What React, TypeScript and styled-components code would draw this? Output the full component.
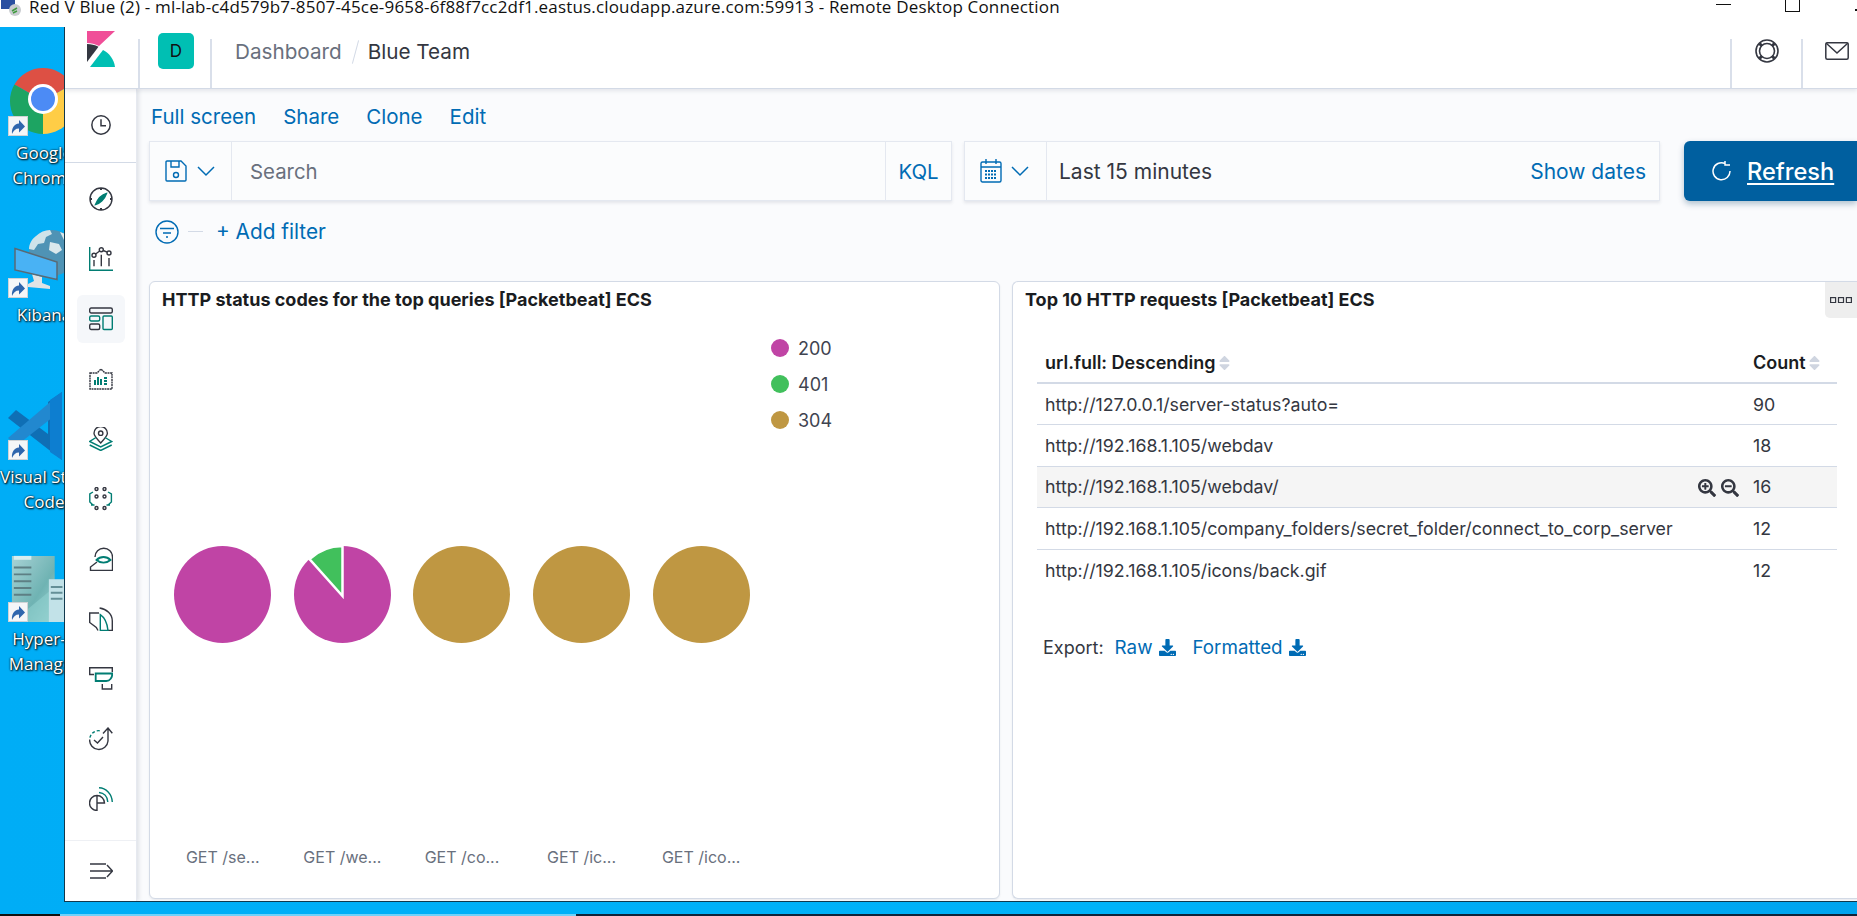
import React from "react";
import styled, { createGlobalStyle } from "styled-components";
import { FaDownload, FaSearchMinus, FaSearchPlus, FaSort } from "react-icons/fa";

const Global = createGlobalStyle`
  html, body { margin: 0; padding: 0; overflow: hidden; background: #00adf6; }
  * { box-sizing: border-box; }
`;

const LINK = "#006bb4";
const DARK = "#343741";
const TEAL = "#017d73";
const BORDER = "#d3dae6";

const Page = styled.div`
  width: 1857px;
  height: 916px;
  display: flex;
  flex-direction: column;
  overflow: hidden;
  font-family: Inter, "Liberation Sans", sans-serif;
  color: ${DARK};
`;
const TitleBar = styled.div`
  height: 27px;
  flex: none;
  background: #fff;
  display: flex;
  align-items: flex-start;
  overflow: hidden;
`;
const TitleIcon = styled.svg`
  width: 22px;
  height: 16px;
  margin: 0 7px 0 0;
  flex: none;
`;
const TitleText = styled.div`
  font-family: "Open Sans", "Liberation Sans", sans-serif;
  font-size: 17px;
  line-height: 13px;
  color: #111;
  white-space: nowrap;
  flex: 1;
  min-width: 0;
  letter-spacing: 0.17px;
`;
const WinControls = styled.div`
  display: flex;
  align-items: flex-start;
  height: 14px;
  flex: none;
`;
const WinMin = styled.div`
  width: 15px;
  height: 1px;
  margin-top: 4px;
  background: #111;
`;
const WinMax = styled.div`
  width: 15px;
  height: 12px;
  margin: 0 55px 0 54px;
  border: 1px solid #111;
  border-top: none;
`;
const WinClose = styled.div`
  width: 2px;
  height: 2px;
  margin-top: 9px;
  background: #111;
`;
const Desktop = styled.div`
  height: 887px;
  flex: none;
  display: flex;
  align-items: flex-start;
  background: linear-gradient(90deg, #00adf6, #00b3f9 60%, #00a4ef);
`;
const TaskEdge = styled.div`
  height: 2px;
  flex: none;
  background: linear-gradient(90deg, #111 60px, #6fd2fa 60px, #6fd2fa 576px, #10243a 576px);
`;
const Strip = styled.div`
  width: 64px;
  height: 887px;
  flex: none;
  overflow: hidden;
  padding-top: 39px;
`;
const Shortcut = styled.div`
  width: 88px;
  height: 162px;
`;
const Art = styled.div`
  position: relative;
  width: 88px;
  height: 70px;
`;
const ArtSvg = styled.svg`
  display: block;
  width: 88px;
  height: 70px;
  overflow: visible;
`;
const Badge = styled.svg`
  position: absolute;
  left: 8px;
  bottom: 0;
  width: 20px;
  height: 20px;
`;
const ShortcutLabel = styled.div`
  margin-top: 4px;
  text-align: center;
  color: #fff;
  font-family: "Open Sans", "Liberation Sans", sans-serif;
  font-size: 17px;
  line-height: 25px;
  white-space: nowrap;
  text-shadow: 1px 1px 2px #000, 0 0 2px #000;
`;
const Window = styled.div`
  width: 1793px;
  height: 875px;
  flex: none;
  background: #fff;
  border-left: 1px solid #12394d;
  border-bottom: 1px solid #12394d;
  display: flex;
  flex-direction: column;
  overflow: hidden;
`;
const Header = styled.header`
  height: 62px;
  flex: none;
  display: flex;
  background: #fff;
  border-bottom: 1px solid ${BORDER};
  box-shadow: 0 2px 4px rgba(65, 78, 101, 0.12);
  position: relative;
  z-index: 2;
`;
const LogoCell = styled.div`
  width: 73px;
  flex: none;
  padding: 4px 0 0 22px;
`;
const Divided = styled.div`
  flex: none;
  border-left: 2px solid #d9dfea;
  margin-top: 12px;
  height: 49px;
`;
const AvatarCell = styled(Divided)`
  width: 72px;
  position: relative;
`;
const Avatar = styled.div`
  position: absolute;
  left: 18px;
  top: -6px;
  width: 36px;
  height: 36px;
  border-radius: 5px;
  background: #00bfb3;
  color: #111;
  font-size: 17px;
  display: flex;
  align-items: center;
  justify-content: center;
`;
const Crumbs = styled.div`
  flex: 1;
  border-left: 2px solid #d9dfea;
  margin-top: 12px;
  height: 49px;
  padding: 0 0 0 23px;
  display: flex;
  align-items: flex-start;
  font-size: 20.7px;
  line-height: 26px;
`;
const CrumbMuted = styled.span`
  color: #69707d;
`;
const CrumbSep = styled.span`
  width: 1px;
  height: 24px;
  margin: 1px 12px 0 13px;
  background: ${BORDER};
  transform: rotate(15deg);
`;
const CrumbCurrent = styled.span`
  color: ${DARK};
`;
const HeaderIconCell = styled(Divided)`
  width: 71px;
  display: flex;
  justify-content: center;
  padding-top: 0;
`;
const HeaderMailCell = styled(Divided)`
  width: 56px;
  padding: 3px 0 0 22px;
`;
const Body = styled.div`
  flex: 1;
  min-height: 0;
  display: flex;
`;
const Sidebar = styled.nav`
  width: 72px;
  flex: none;
  background: #fff;
  box-shadow: 2px 0 4px rgba(65, 78, 101, 0.14);
  border-right: 1px solid #e6e9f0;
  display: flex;
  flex-direction: column;
  position: relative;
  z-index: 1;
`;
const NavRecent = styled.div`
  height: 74px;
  flex: none;
  border-bottom: 1px solid ${BORDER};
  padding-bottom: 2px;
  display: flex;
  align-items: center;
  justify-content: center;
`;
const NavList = styled.div`
  flex: 1;
  padding-top: 6px;
  display: flex;
  flex-direction: column;
`;
const NavItem = styled.div<{ $active?: boolean }>`
  height: 48px;
  width: 48px;
  margin: 6px 12px;
  flex: none;
  display: flex;
  align-items: center;
  justify-content: center;
  border-radius: 6px;
  background: ${(p) => (p.$active ? "#f5f7fa" : "transparent")};
`;
const NavFoot = styled.div`
  height: 61px;
  flex: none;
  border-top: 1px solid #eef0f4;
  display: flex;
  align-items: center;
  justify-content: center;
`;
const Nic = styled.svg`
  width: 24px;
  height: 24px;
  fill: none;
  stroke: ${DARK};
  stroke-width: 1.4;
`;
const ClockIcon = styled(Nic)`
  width: 20px;
  height: 20px;
`;
const Main = styled.main`
  flex: 1;
  min-width: 0;
  background: #fafbfd;
  padding-left: 12px;
  overflow: hidden;
`;
const TopLinks = styled.div`
  height: 52px;
  display: flex;
  align-items: center;
  gap: 27px;
  padding: 4px 0 0 2px;
`;
const TopLink = styled.a`
  color: ${LINK};
  font-size: 20.5px;
  line-height: 24px;
`;
const QueryRow = styled.div`
  display: flex;
  align-items: stretch;
  height: 60px;
`;
const Box = styled.div`
  display: flex;
  align-items: center;
  flex: none;
  height: 60px;
  border: 1px solid #e4e8f0;
  background: #fbfcfd;
  box-shadow: 0 2px 3px rgba(65, 78, 101, 0.12);
`;
const SearchBox = styled(Box)`
  width: 803px;
`;
const DateBox = styled(Box)`
  width: 696px;
  margin-left: 12px;
`;
const Prepend = styled.div`
  height: 100%;
  flex: none;
  display: flex;
  align-items: center;
  border-right: 1px solid #e4e8f0;
`;
const SavePrepend = styled(Prepend)`
  width: 82px;
  padding-left: 15px;
  gap: 9px;
`;
const CalPrepend = styled(Prepend)`
  width: 82px;
  padding-left: 15px;
  gap: 8px;
`;
const SearchText = styled.div`
  flex: 1;
  padding-left: 18px;
  font-size: 20.4px;
  color: #69707d;
`;
const KqlCell = styled.div`
  width: 66px;
  height: 100%;
  flex: none;
  border-left: 1px solid #e4e8f0;
  display: flex;
  align-items: center;
  justify-content: center;
  font-size: 20.4px;
  color: ${LINK};
`;
const DateText = styled.div`
  flex: 1;
  padding-left: 12px;
  font-size: 21px;
  color: ${DARK};
`;
const ShowDates = styled.a`
  padding-right: 13px;
  font-size: 21px;
  color: ${LINK};
`;
const RefreshButton = styled.button`
  width: 173px;
  height: 60px;
  margin-left: 24px;
  flex: none;
  border: none;
  border-radius: 6px 0 0 6px;
  background: #005f9f;
  color: #fff;
  box-shadow: 0 3px 6px rgba(0, 60, 100, 0.3);
  display: flex;
  align-items: center;
  padding: 0 0 0 28px;
  gap: 15px;
  font-family: inherit;
  font-size: 23.6px;
  font-weight: 500;
`;
const RefreshLabel = styled.span`
  text-decoration: underline;
  text-underline-offset: 3px;
`;
const FilterRow = styled.div`
  height: 60px;
  display: flex;
  align-items: center;
  padding: 1px 0 0 6px;
`;
const FilterDash = styled.span`
  width: 15px;
  height: 1px;
  margin: 0 13px 0 9px;
  background: ${BORDER};
`;
const AddFilter = styled.a`
  font-size: 20.8px;
  color: ${LINK};
`;
const Panels = styled.div`
  margin-top: 20px;
  display: flex;
  gap: 12px;
`;
const Panel = styled.section<{ $w: number; $open?: boolean }>`
  width: ${(p) => p.$w}px;
  height: 618px;
  flex: none;
  background: #fff;
  border: 1px solid ${BORDER};
  border-right: ${(p) => (p.$open ? "none" : undefined)};
  border-radius: ${(p) => (p.$open ? "6px 0 0 6px" : "6px")};
  box-shadow: 0 1px 2px rgba(65, 78, 101, 0.1);
  position: relative;
  overflow: hidden;
`;
const PanelTitle = styled.h3`
  margin: 0;
  height: 35px;
  padding: 8px 0 0 12px;
  font-size: 18px;
  line-height: 20px;
  font-weight: 700;
  color: #1a1c21;
`;
const OptionsButton = styled.div`
  position: absolute;
  top: 0;
  right: 0;
  width: 32px;
  height: 36px;
  background: #eeeeee;
  border-bottom-left-radius: 5px;
  display: flex;
  align-items: center;
  justify-content: center;
`;
const Legend = styled.ul`
  list-style: none;
  margin: 13px 0 0 621px;
  padding: 0;
`;
const LegendRow = styled.li`
  height: 36px;
  display: flex;
  align-items: center;
  gap: 9px;
  font-size: 18px;
  color: #3f4450;
`;
const LegendDot = styled.span<{ $c: string }>`
  width: 18px;
  height: 18px;
  border-radius: 50%;
  background: ${(p) => p.$c};
`;
const PieRow = styled.div`
  margin: 108px 0 0 13px;
  display: flex;
`;
const PieCell = styled.div`
  width: 119.6px;
  display: flex;
  justify-content: center;
`;
const LabelRow = styled.div`
  margin: 204px 0 0 13px;
  display: flex;
`;
const PieLabel = styled.div`
  width: 119.6px;
  text-align: center;
  font-size: 16px;
  line-height: 20px;
  color: #69707d;
`;
const TableWrap = styled.div`
  margin: 25px 0 0 24px;
  width: 800px;
`;
const Table = styled.table`
  width: 800px;
  border-collapse: collapse;
  table-layout: fixed;
  font-size: 17.8px;
`;
const Th = styled.th<{ $w: number }>`
  width: ${(p) => p.$w}px;
  height: 41px;
  padding: 0 0 0 8px;
  text-align: left;
  font-weight: 600;
  color: #1a1c21;
  font-size: 18px;
  border-bottom: 2px solid ${BORDER};
  white-space: nowrap;
`;
const SortIcon = styled(FaSort)`
  width: 13px;
  height: 18px;
  margin: 0 0 -3px 2px;
  color: #cfd5e0;
`;
const Tr = styled.tr<{ $hover?: boolean }>`
  height: 41.5px;
  background: ${(p) => (p.$hover ? "#f5f5f5" : "transparent")};
  border-bottom: 1px solid ${BORDER};
  &:last-child {
    border-bottom: none;
  }
`;
const Td = styled.td`
  padding: 0 0 0 8px;
  color: #343741;
  white-space: nowrap;
  position: relative;
`;
const CellTools = styled.span`
  position: absolute;
  right: 6px;
  top: 12px;
  display: flex;
  gap: 5px;
  color: #343741;
`;
const ExportRow = styled.div`
  margin: 45px 0 0 6px;
  display: flex;
  align-items: center;
  font-size: 18px;
  color: #343741;
`;
const ExportLabel = styled.span`
  margin-right: 11px;
`;
const ExportLink = styled.a`
  color: ${LINK};
  display: flex;
  align-items: center;
  gap: 6px;
  margin-right: 17px;
  font-size: 18.8px;
`;

const Blue = { stroke: LINK, fill: "none", strokeWidth: 1.4 } as const;
const T = { stroke: TEAL } as const;

const Chevron = () => (
  <svg width="20" height="20" viewBox="0 0 20 20" fill="none" stroke={LINK} strokeWidth="1.5">
    <path d="M2 6l8 8 8-8" />
  </svg>
);

const Logo = () => (
  <svg width="28" height="36" viewBox="0 0 28 36">
    <path d="M0 0h28L12 15C8 13 4 12 0 12z" fill="#f04e98" />
    <path d="M0 13c4 0 8 .8 11.500 2.800L0 31z" fill="#343741" />
    <path d="M3 36L16 19c6 3 11 9 12 17z" fill="#00bfb3" />
  </svg>
);

const Pie = ({ c, wedge }: { c: string; wedge?: boolean }) => (
  <svg width="97" height="97" viewBox="0 0 97 97">
    <circle cx="48.500" cy="48.500" r="48.500" fill={c} />
    {wedge && <path d="M48.500 50L48.500 0A48.500 48.500 0 0 0 15.500 13z" fill="#41c05c" stroke="#fff" strokeWidth="2.500" />}
  </svg>
);

const ShortcutBadge = () => (
  <Badge viewBox="0 0 20 20">
    <rect x=".5" y=".5" width="19" height="19" fill="#f4f6f8" stroke="#cfd3d6" />
    <path d="M4 18c-.5-6 2-10 7-10.500V4l6 6.500-6 6V12.500c-3.500 0-5.500 2-7 5.500z" fill="#2f66ad" />
  </Badge>
);

const ChromeArt = () => (
  <ArtSvg viewBox="0 0 88 70">
    <path d="M43 35L14.400 18.500A33 33 0 0 1 71.600 18.500z" fill="#dd5044" />
    <path d="M43 35L14.400 18.500A33 33 0 0 0 43 68z" fill="#1da462" />
    <path d="M43 35L43 68A33 33 0 0 0 71.600 18.500z" fill="#ffcd46" />
    <circle cx="43" cy="33" r="15" fill="#fff" />
    <circle cx="43" cy="33" r="12" fill="#4c8bf5" />
  </ArtSvg>
);

const KibanaArt = () => (
  <ArtSvg viewBox="0 0 88 70">
    <circle cx="52" cy="25" r="23" fill="#4f93b5" />
    <path d="M36 8c4-4 9-6 14-6l2 4-6 3-2 6-6 1-4 6-5-1c0-5 3-10 7-13z" fill="#cfe3ea" />
    <path d="M50 14l9 2 3 6-6 4-7-4zM60 4l5 2 5 8-6-2z" fill="#dbe8ec" />
    <path d="M32 46l10 3v6l8 3v3l-22-2v-3l6-3z" fill="#dfe3e5" />
    <path d="M15 20.500l42 13.500v17.500L15 42z" fill="#49b2f4" stroke="#5a6a75" strokeWidth="1.500" />
  </ArtSvg>
);

const VsArt = () => (
  <ArtSvg viewBox="0 0 88 70">
    <path d="M62 2v68L8 28l8-8 32 24V12z" fill="#0f6fb5" />
    <path d="M62 2L8 48l8 8L62 20z" fill="#2288cf" />
    <path d="M50 10l12-8v68l-12-8z" fill="#0d7ed0" />
  </ArtSvg>
);

const HyperArt = () => (
  <ArtSvg viewBox="0 0 88 72">
    <defs>
      <linearGradient id="srv" x1="0" y1="0" x2="1" y2="1">
        <stop offset="0" stopColor="#a9d3d6" />
        <stop offset=".6" stopColor="#6fb3b3" />
        <stop offset="1" stopColor="#9fd4d4" />
      </linearGradient>
    </defs>
    <path d="M11 4h44v68H11z" fill="url(#srv)" />
    <path d="M13 4h18v4H13z" fill="#d8eef0" />
    <path d="M13 16h18M13 23h18M13 30h18M13 37h18M13 44h18" stroke="#5d7f84" strokeWidth="2" />
    <path d="M11 72l44-36v36z" fill="#8fd0cf" opacity=".6" />
    <path d="M49 28h16v44H49z" fill="#c2e2e8" />
    <path d="M51 36h12M51 42h12M51 48h12" stroke="#648f97" strokeWidth="2" />
  </ArtSvg>
);

export default function App() {
  return (
    <Page>
      <Global />
      <TitleBar>
        <TitleIcon viewBox="0 0 22 16">
          <rect x="1" y="0" width="14" height="9" fill="#2a4fa0" />
          <circle cx="15" cy="10" r="6" fill="#c9ccd0" />
          <path d="M12 11l5-3M13 13l4-2" stroke="#3e9a3e" strokeWidth="1.500" />
        </TitleIcon>
        <TitleText>Red V Blue (2) - ml-lab-c4d579b7-8507-45ce-9658-6f88f7cc2df1.eastus.cloudapp.azure.com:59913 - Remote Desktop Connection</TitleText>
        <WinControls>
          <WinMin />
          <WinMax />
          <WinClose />
        </WinControls>
      </TitleBar>
      <Desktop>
        <Strip>
          <Shortcut>
            <Art><ChromeArt /><ShortcutBadge /></Art>
            <ShortcutLabel>Google<br />Chrome</ShortcutLabel>
          </Shortcut>
          <Shortcut>
            <Art><KibanaArt /><ShortcutBadge /></Art>
            <ShortcutLabel>Kibana</ShortcutLabel>
          </Shortcut>
          <Shortcut>
            <Art><VsArt /><ShortcutBadge /></Art>
            <ShortcutLabel>Visual Studio<br />Code</ShortcutLabel>
          </Shortcut>
          <Shortcut>
            <Art><HyperArt /><ShortcutBadge /></Art>
            <ShortcutLabel>Hyper-V<br />Manager</ShortcutLabel>
          </Shortcut>
        </Strip>
        <Window>
          <Header>
            <LogoCell><Logo /></LogoCell>
            <AvatarCell><Avatar>D</Avatar></AvatarCell>
            <Crumbs>
              <CrumbMuted>Dashboard</CrumbMuted>
              <CrumbSep />
              <CrumbCurrent>Blue Team</CrumbCurrent>
            </Crumbs>
            <HeaderIconCell>
              <svg width="24" height="24" viewBox="0 0 24 24" fill="none" stroke={DARK} strokeWidth="1.600">
                <circle cx="12" cy="12" r="11" />
                <circle cx="12" cy="12" r="7.500" />
                <path d="M4.500 4.500l2.500 2.500M19.500 4.500L17 7M4.500 19.500L7 17M19.500 19.500L17 17" strokeWidth="3" />
              </svg>
            </HeaderIconCell>
            <HeaderMailCell>
              <svg width="24" height="18" viewBox="0 0 24 18" fill="none" stroke={DARK} strokeWidth="1.500">
                <rect x=".8" y=".8" width="22.400" height="16.400" rx="1.500" />
                <path d="M1 1l11 10L23 1" />
              </svg>
            </HeaderMailCell>
          </Header>
          <Body>
            <Sidebar>
              <NavRecent>
                <ClockIcon viewBox="0 0 24 24">
                  <circle cx="12" cy="12" r="11" strokeWidth="1.800" />
                  <path d="M12 5v8h6" strokeWidth="1.800" />
                </ClockIcon>
              </NavRecent>
              <NavList>
                <NavItem>
                  <Nic viewBox="0 0 24 24">
                    <circle cx="12" cy="12" r="11" />
                    <path d="M12 1v2M12 21v2M1 12h2M21 12h2" strokeWidth="2" />
                    <path d="M17.500 6.500c-4 1-8 4-11 11 4-1 9-5 11-11z" fill={TEAL} {...T} />
                  </Nic>
                </NavItem>
                <NavItem>
                  <Nic viewBox="0 0 24 24">
                    <circle cx="5" cy="8.300" r="2" />
                    <circle cx="12.300" cy="2.700" r="2" />
                    <circle cx="20" cy="6" r="2" />
                    <path d="M6.600 7L10.700 4M14.200 3.500L18.200 5.200M5 13v6.300M12.300 7.700v11.600M20 11v8.300" />
                    <path d="M.7 0v23.300H24" {...T} />
                  </Nic>
                </NavItem>
                <NavItem $active>
                  <Nic viewBox="0 0 24 24">
                    <rect x=".7" y="1" width="22.600" height="5" rx="1.500" />
                    <rect x=".7" y="9" width="10" height="5" rx="1.500" {...T} />
                    <rect x=".7" y="17" width="10" height="5.500" rx="1.500" />
                    <rect x="14" y="9" width="9.300" height="13.500" rx="1" {...T} />
                  </Nic>
                </NavItem>
                <NavItem>
                  <Nic viewBox="0 0 24 24">
                    <path d="M1 6h7l4-4 4 4h7v16H1z" strokeDasharray="2 .6" />
                    <path d="M6 13v5M9 10v8M12 12v6M15 11h3M15 14h3M15 17h3" stroke={TEAL} strokeWidth="2" />
                  </Nic>
                </NavItem>
                <NavItem>
                  <Nic viewBox="0 0 24 24">
                    <path d="M11.700 16C8 12 5 8.500 5 6.200a6.700 6.700 0 0 1 13.400 0c0 2.300-3 5.800-6.700 9.800z" />
                    <circle cx="11.700" cy="6.200" r="2.200" />
                    <path d="M7 10.500L.7 14.500l11 5.500 11-5.500-6.700-4M.7 18l11 5.500 11-5.500" {...T} />
                  </Nic>
                </NavItem>
                <NavItem>
                  <Nic viewBox="0 0 24 24">
                    <circle cx="7.500" cy="2" r="1.500" />
                    <circle cx="15.500" cy="2" r="1.500" />
                    <circle cx="7.500" cy="9.500" r="1.500" />
                    <circle cx="15.500" cy="9.500" r="1.500" />
                    <circle cx="7.500" cy="21" r="1.500" />
                    <circle cx="15.500" cy="21" r="1.500" />
                    <path d="M4 5L.8 7v8L4 18M2 18h3.500M19 5l3.400 2v8L19 18M21 18h-3.500" {...T} />
                  </Nic>
                </NavItem>
                <NavItem>
                  <Nic viewBox="0 0 24 24">
                    <path d="M6 10a8.750 8.750 0 1 1 17.500 0v13.500H1.500V20L8 15" />
                    <path d="M7.500 13c4-4 10-4 14 0-4 3.500-10 3.500-14 0z" {...T} strokeWidth="1.800" />
                  </Nic>
                </NavItem>
                <NavItem>
                  <Nic viewBox="0 0 24 24">
                    <path d="M10.600 1c7 1 12.700 6 12.700 13v9.500H19M10 6H.7v9.500l6.600 5 1.700 3" />
                    <path d="M11.300 23.500V7.600c4.500 3 7 9 7.700 15.900z" {...T} />
                  </Nic>
                </NavItem>
                <NavItem>
                  <Nic viewBox="0 0 24 24">
                    <path d="M5 7.500H.7V.7h22.600V5M13.300 17v5h9.400v-5" />
                    <path d="M6.700 6.500h16.600c0 4-2.300 7.500-6 7.500H6.700z" {...T} strokeWidth="1.800" />
                  </Nic>
                </NavItem>
                <NavItem>
                  <Nic viewBox="0 0 24 24">
                    <path d="M19 1.500V14a9 9 0 0 1-18.300-1.500M14 6.500L19 1l4.300 5.300" />
                    <path d="M10.700 3.700A9 9 0 0 0 .7 12" {...T} strokeDasharray="3 2" />
                    <path d="M5 13l3.500 3 5.500-6" />
                  </Nic>
                </NavItem>
                <NavItem>
                  <Nic viewBox="0 0 24 24">
                    <path d="M8 8.500a7.500 7.500 0 1 0 0 15V8.500zM8 16h7.500a7.500 7.500 0 0 0-7.500-7.500" />
                    <path d="M10 .7C17 1 23 7 23.300 15M10 5.500c5 .3 8.500 4 8.800 9.500" {...T} />
                  </Nic>
                </NavItem>
              </NavList>
              <NavFoot>
                <Nic viewBox="0 0 24 24">
                  <path d="M1 5h16M1 12h22M1 19h16M18 6l5.500 6-5.500 6" />
                </Nic>
              </NavFoot>
            </Sidebar>
            <Main>
              <TopLinks>
                <TopLink>Full screen</TopLink>
                <TopLink>Share</TopLink>
                <TopLink>Clone</TopLink>
                <TopLink>Edit</TopLink>
              </TopLinks>
              <QueryRow>
                <SearchBox>
                  <SavePrepend>
                    <svg width="22" height="22" viewBox="0 0 22 22" {...Blue}>
                      <path d="M1 2a1 1 0 0 1 1-1h14l5 5v14a1 1 0 0 1-1 1H2a1 1 0 0 1-1-1z" />
                      <path d="M6 1v6h8V1" />
                      <circle cx="11" cy="15" r="2.500" />
                    </svg>
                    <Chevron />
                  </SavePrepend>
                  <SearchText>Search</SearchText>
                  <KqlCell>KQL</KqlCell>
                </SearchBox>
                <DateBox>
                  <CalPrepend>
                    <svg width="22" height="24" viewBox="0 0 22 24" {...Blue}>
                      <rect x="1" y="3" width="20" height="20" rx="1.500" />
                      <path d="M1 8h20M6 0v5M16 0v5" />
                      <path d="M5 12h12M5 15.500h12M5 19h12" strokeWidth="2" strokeDasharray="2 1" />
                    </svg>
                    <Chevron />
                  </CalPrepend>
                  <DateText>Last 15 minutes</DateText>
                  <ShowDates>Show dates</ShowDates>
                </DateBox>
                <RefreshButton>
                  <svg width="20" height="20" viewBox="0 0 20 20" fill="none" stroke="#fff" strokeWidth="1.500">
                    <path d="M13 2.500a8.500 8.500 0 1 0 5 7.500M13 0v4h5" />
                  </svg>
                  <RefreshLabel>Refresh</RefreshLabel>
                </RefreshButton>
              </QueryRow>
              <FilterRow>
                <svg width="24" height="24" viewBox="0 0 24 24" {...Blue}>
                  <circle cx="12" cy="12" r="11" />
                  <path d="M5 8.500h14M8 13h8M11 17h2" />
                </svg>
                <FilterDash />
                <AddFilter>+ Add filter</AddFilter>
              </FilterRow>
              <Panels>
                <Panel $w={851}>
                  <PanelTitle>HTTP status codes for the top queries [Packetbeat] ECS</PanelTitle>
                  <Legend>
                    <LegendRow><LegendDot $c="#c044a5" />200</LegendRow>
                    <LegendRow><LegendDot $c="#41c05c" />401</LegendRow>
                    <LegendRow><LegendDot $c="#bf9742" />304</LegendRow>
                  </Legend>
                  <PieRow>
                    <PieCell><Pie c="#c044a5" /></PieCell>
                    <PieCell><Pie c="#c044a5" wedge /></PieCell>
                    <PieCell><Pie c="#bf9742" /></PieCell>
                    <PieCell><Pie c="#bf9742" /></PieCell>
                    <PieCell><Pie c="#bf9742" /></PieCell>
                  </PieRow>
                  <LabelRow>
                    <PieLabel>GET /se...</PieLabel>
                    <PieLabel>GET /we...</PieLabel>
                    <PieLabel>GET /co...</PieLabel>
                    <PieLabel>GET /ic...</PieLabel>
                    <PieLabel>GET /ico...</PieLabel>
                  </LabelRow>
                </Panel>
                <Panel $w={845} $open>
                  <PanelTitle>Top 10 HTTP requests [Packetbeat] ECS</PanelTitle>
                  <OptionsButton>
                    <svg width="22" height="6" viewBox="0 0 22 6" fill="none" stroke={DARK} strokeWidth="1.200">
                      <rect x=".6" y=".6" width="5" height="5" />
                      <rect x="8.500" y=".6" width="5" height="5" />
                      <rect x="16.400" y=".6" width="5" height="5" />
                    </svg>
                  </OptionsButton>
                  <TableWrap>
                    <Table>
                      <thead>
                        <tr>
                          <Th $w={708}>url.full: Descending<SortIcon /></Th>
                          <Th $w={92}>Count<SortIcon /></Th>
                        </tr>
                      </thead>
                      <tbody>
                        <Tr><Td>http://127.0.0.1/server-status?auto=</Td><Td>90</Td></Tr>
                        <Tr><Td>http://192.168.1.105/webdav</Td><Td>18</Td></Tr>
                        <Tr $hover>
                          <Td>
                            http://192.168.1.105/webdav/
                            <CellTools><FaSearchPlus size={18} /><FaSearchMinus size={18} /></CellTools>
                          </Td>
                          <Td>16</Td>
                        </Tr>
                        <Tr><Td>http://192.168.1.105/company_folders/secret_folder/connect_to_corp_server</Td><Td>12</Td></Tr>
                        <Tr><Td>http://192.168.1.105/icons/back.gif</Td><Td>12</Td></Tr>
                      </tbody>
                    </Table>
                    <ExportRow>
                      <ExportLabel>Export:</ExportLabel>
                      <ExportLink>Raw <FaDownload size={17} /></ExportLink>
                      <ExportLink>Formatted <FaDownload size={17} /></ExportLink>
                    </ExportRow>
                  </TableWrap>
                </Panel>
              </Panels>
            </Main>
          </Body>
        </Window>
      </Desktop>
      <TaskEdge />
    </Page>
  );
}
